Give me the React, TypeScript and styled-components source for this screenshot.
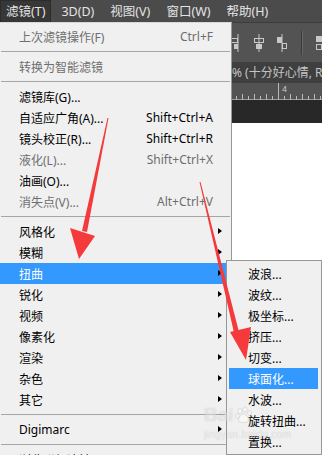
import React from "react";
import styled, { createGlobalStyle } from "styled-components";

const GlobalStyle = createGlobalStyle`
  html, body {
    margin: 0;
    padding: 0;
    background: #ffffff;
  }
  body {
    font-family: "Noto Sans", "Noto Sans CJK SC", sans-serif;
  }
`;

type MenuEntry =
  | { kind: "item"; label: string; shortcut?: string; disabled?: boolean; sub?: boolean; active?: boolean }
  | { kind: "sep" };

const filterMenu: MenuEntry[] = [
  { kind: "item", label: "上次滤镜操作(F)", shortcut: "Ctrl+F", disabled: true },
  { kind: "sep" },
  { kind: "item", label: "转换为智能滤镜", disabled: true },
  { kind: "sep" },
  { kind: "item", label: "滤镜库(G)..." },
  { kind: "item", label: "自适应广角(A)...", shortcut: "Shift+Ctrl+A" },
  { kind: "item", label: "镜头校正(R)...", shortcut: "Shift+Ctrl+R" },
  { kind: "item", label: "液化(L)...", shortcut: "Shift+Ctrl+X", disabled: true },
  { kind: "item", label: "油画(O)..." },
  { kind: "item", label: "消失点(V)...", shortcut: "Alt+Ctrl+V", disabled: true },
  { kind: "sep" },
  { kind: "item", label: "风格化", sub: true },
  { kind: "item", label: "模糊", sub: true },
  { kind: "item", label: "扭曲", sub: true, active: true },
  { kind: "item", label: "锐化", sub: true },
  { kind: "item", label: "视频", sub: true },
  { kind: "item", label: "像素化", sub: true },
  { kind: "item", label: "渲染", sub: true },
  { kind: "item", label: "杂色", sub: true },
  { kind: "item", label: "其它", sub: true },
  { kind: "sep" },
  { kind: "item", label: "Digimarc", sub: true },
  { kind: "sep" },
  { kind: "item", label: "浏览联机滤镜..." },
];

const distortMenu = [
  "波浪...",
  "波纹...",
  "极坐标...",
  "挤压...",
  "切变...",
  "球面化...",
  "水波...",
  "旋转扭曲...",
  "置换...",
];

const Page = styled.div`
  position: relative;
  width: 322px;
  height: 455px;
  overflow: hidden;
  display: flex;
  flex-direction: column;
  background: #ffffff;
`;

const MenuBar = styled.div`
  display: flex;
  align-items: center;
  height: 22px;
  background: #4b4b4b;
  gap: 4px;
`;

const MenuTitle = styled.div<{ $open?: boolean }>`
  box-sizing: border-box;
  height: 22px;
  line-height: 21px;
  padding: 0 5px;
  font-size: 12.5px;
  color: #e4e4e4;
  white-space: nowrap;
  background: ${(p) => (p.$open ? "#373737" : "transparent")};
  border: 1px solid ${(p) => (p.$open ? "#2c2c2c" : "transparent")};
  border-bottom: none;
`;

const Workspace = styled.div`
  flex: 1;
  display: flex;
  flex-direction: column;
`;

const OptionsBar = styled.div`
  height: 40px;
  box-sizing: border-box;
  border-top: 1px solid #3c3c3c;
  background: #535353;
  display: flex;
  align-items: center;
  padding-left: 229px;
  gap: 9px;
  overflow: hidden;
`;

const ToolDivider = styled.div`
  flex: none;
  width: 1px;
  height: 24px;
  margin: 0 3px 0 3px;
  background: #3a3a3a;
  border-right: 1px solid #666;
`;

const TabStrip = styled.div`
  height: 21px;
  background: #3f3f3f;
  color: #c4c4c4;
  font-size: 12px;
  line-height: 21px;
  padding-left: 232px;
  white-space: nowrap;
  overflow: hidden;
`;

const Ruler = styled.div`
  height: 17px;
  background: #535353;
  position: relative;
`;

const Pasteboard = styled.div`
  height: 23px;
  background: #282828;
`;

const Canvas = styled.div`
  flex: 1;
  background: #ffffff;
`;

const Dropdown = styled.div`
  position: absolute;
  top: 22px;
  left: 0;
  width: 232px;
  box-sizing: border-box;
  background: #f0f0f0;
  border-right: 1px solid #979797;
  border-top: 1px solid #d8d8d8;
  padding: 3px 1px 0 0;
`;

const SubMenu = styled.div`
  position: absolute;
  top: 260px;
  left: 226px;
  width: 96px;
  box-sizing: border-box;
  background: #f0f0f0;
  border: 1px solid #979797;
  padding: 2px 3px 2px 2px;
`;

const Row = styled.div<{ $active?: boolean; $disabled?: boolean; $indent: number }>`
  position: relative;
  height: 21px;
  display: flex;
  align-items: center;
  padding-left: ${(p) => p.$indent}px;
  padding-right: 17px;
  font-size: 12px;
  white-space: nowrap;
  color: ${(p) => (p.$active ? "#ffffff" : p.$disabled ? "#6e6e6e" : "#000000")};
  background: ${(p) => (p.$active ? "#3399ff" : "transparent")};
`;

const Label = styled.span`
  flex: 1;
`;

const Shortcut = styled.span`
  text-align: right;
`;

const SubArrow = styled.span`
  position: absolute;
  left: 218px;
  top: 7px;
  width: 0;
  height: 0;
  border-top: 3.5px solid transparent;
  border-bottom: 3.5px solid transparent;
  border-left: 4px solid #000;
`;

const Separator = styled.div`
  height: 9px;
  display: flex;
  align-items: center;
  padding-left: 1px;
  &::after {
    content: "";
    flex: 1;
    height: 1px;
    background: #a5a5a5;
  }
`;

const Watermark = styled.div`
  position: absolute;
  left: 204px;
  top: 405px;
  color: rgba(255, 255, 255, 0.5);
  text-shadow: 0 0 1px rgba(140, 140, 140, 0.45);
  font-family: "Liberation Sans", sans-serif;
  pointer-events: none;
  opacity: 0.8;
`;

const WatermarkLogo = styled.div`
  display: flex;
  align-items: center;
  gap: 1px;
  font-size: 19px;
  font-weight: bold;
  line-height: 20px;
`;

const WatermarkUrl = styled.div`
  font-size: 10px;
  line-height: 12px;
  margin-top: 4px;
  letter-spacing: 0.4px;
`;

const Annotation = styled.svg`
  position: absolute;
  left: 0;
  top: 0;
  pointer-events: none;
`;

const AlignIcon = ({ kind }: { kind: number }) => (
  <svg width="14" height="18" viewBox="0 0 14 18" style={{ flex: "none" }}>
    {kind === 0 && (
      <g fill="none" stroke="#c8c8c8">
        <path d="M7 0v18" />
        <rect x="2.5" y="3.5" width="4" height="5" fill="#c8c8c8" />
        <rect x="7.5" y="9.5" width="4" height="5" />
      </g>
    )}
    {kind === 1 && (
      <g fill="none" stroke="#c8c8c8">
        <path d="M7 0v18" />
        <rect x="2.5" y="4.5" width="9" height="4" />
        <rect x="4.5" y="10.5" width="5" height="4" fill="#c8c8c8" />
      </g>
    )}
    {kind === 2 && (
      <g fill="none" stroke="#c8c8c8">
        <path d="M9 0v18" />
        <rect x="2.5" y="4.5" width="6" height="4" />
        <rect x="5.5" y="10.5" width="3" height="4" fill="#c8c8c8" />
      </g>
    )}
    {kind === 3 && (
      <g fill="none" stroke="#c8c8c8">
        <rect x="1.5" y="2.5" width="5" height="5" fill="#c8c8c8" />
        <rect x="1.5" y="10.5" width="5" height="5" />
      </g>
    )}
  </svg>
);

const Paw = () => (
  <svg width="18" height="18" viewBox="0 0 18 18">
    <g fill="rgba(255,255,255,0.6)" stroke="rgba(150,150,150,0.5)" strokeWidth="0.6">
      <ellipse cx="5" cy="5" rx="2" ry="2.6" />
      <ellipse cx="10" cy="3.5" rx="2" ry="2.6" />
      <ellipse cx="14.5" cy="7" rx="1.8" ry="2.3" />
      <ellipse cx="2.5" cy="10" rx="1.8" ry="2.3" />
      <path d="M8.5 8c2.5 0 5 4 5 6s-2 2.5-5 2.5-5-.5-5-2.5 2.5-6 5-6z" />
    </g>
  </svg>
);

const RulerTicks = () => {
  const ticks = [];
  for (let i = 0; i < 20; i++) {
    const x = 218 + i * 6;
    const major = x === 278;
    ticks.push(
      <line
        key={i}
        x1={x + 0.5}
        x2={x + 0.5}
        y1={major ? 0 : i % 2 === 0 ? 11 : 13}
        y2={17}
        stroke="#b9b9b9"
      />
    );
  }
  return (
    <svg width="322" height="17" style={{ position: "absolute", left: 0, top: 0 }}>
      <line x1="0" x2="322" y1="16.5" y2="16.5" stroke="#9a9a9a" />
      {ticks}
      <text x="282" y="9" fontSize="9" fill="#c8c8c8" fontFamily="Liberation Sans, sans-serif">
        4
      </text>
    </svg>
  );
};

const App = () => {
  return (
    <>
      <GlobalStyle />
      <Page>
        <MenuBar>
          <MenuTitle $open>滤镜(T)</MenuTitle>
          <MenuTitle>3D(D)</MenuTitle>
          <MenuTitle>视图(V)</MenuTitle>
          <MenuTitle>窗口(W)</MenuTitle>
          <MenuTitle>帮助(H)</MenuTitle>
        </MenuBar>

        <Workspace>
          <OptionsBar>
            <AlignIcon kind={2} />
            <AlignIcon kind={1} />
            <AlignIcon kind={0} />
            <ToolDivider />
            <AlignIcon kind={3} />
          </OptionsBar>
          <TabStrip>% (十分好心情, RGB/8) *</TabStrip>
          <Ruler>
            <RulerTicks />
          </Ruler>
          <Pasteboard />
          <Canvas />
        </Workspace>

        <Dropdown>
          {filterMenu.map((entry, i) =>
            entry.kind === "sep" ? (
              <Separator key={i} />
            ) : (
              <Row key={i} $indent={19} $active={entry.active} $disabled={entry.disabled}>
                <Label>{entry.label}</Label>
                {entry.shortcut && <Shortcut>{entry.shortcut}</Shortcut>}
                {entry.sub && <SubArrow />}
              </Row>
            )
          )}
        </Dropdown>

        <SubMenu>
          {distortMenu.map((label, i) => (
            <Row key={i} $indent={19} $active={label === "球面化..."}>
              <Label>{label}</Label>
            </Row>
          ))}
        </SubMenu>

        <Watermark>
          <WatermarkLogo>
            Bai
            <Paw />
          </WatermarkLogo>
          <WatermarkUrl>jingyan.baidu.com</WatermarkUrl>
        </Watermark>

        <Annotation width="322" height="455" viewBox="0 0 322 455">
          <polygon points="107.5,118 108.5,118 87,232 82,231" fill="#f43a3a" />
          <polygon points="70,228 95,236 79,259" fill="#f43a3a" />
          <polygon points="199.5,182 200.5,182 240,336 235,337" fill="#f43a3a" />
          <polygon points="230,332 251,327 246,360" fill="#f43a3a" />
        </Annotation>
      </Page>
    </>
  );
};

export default App;
